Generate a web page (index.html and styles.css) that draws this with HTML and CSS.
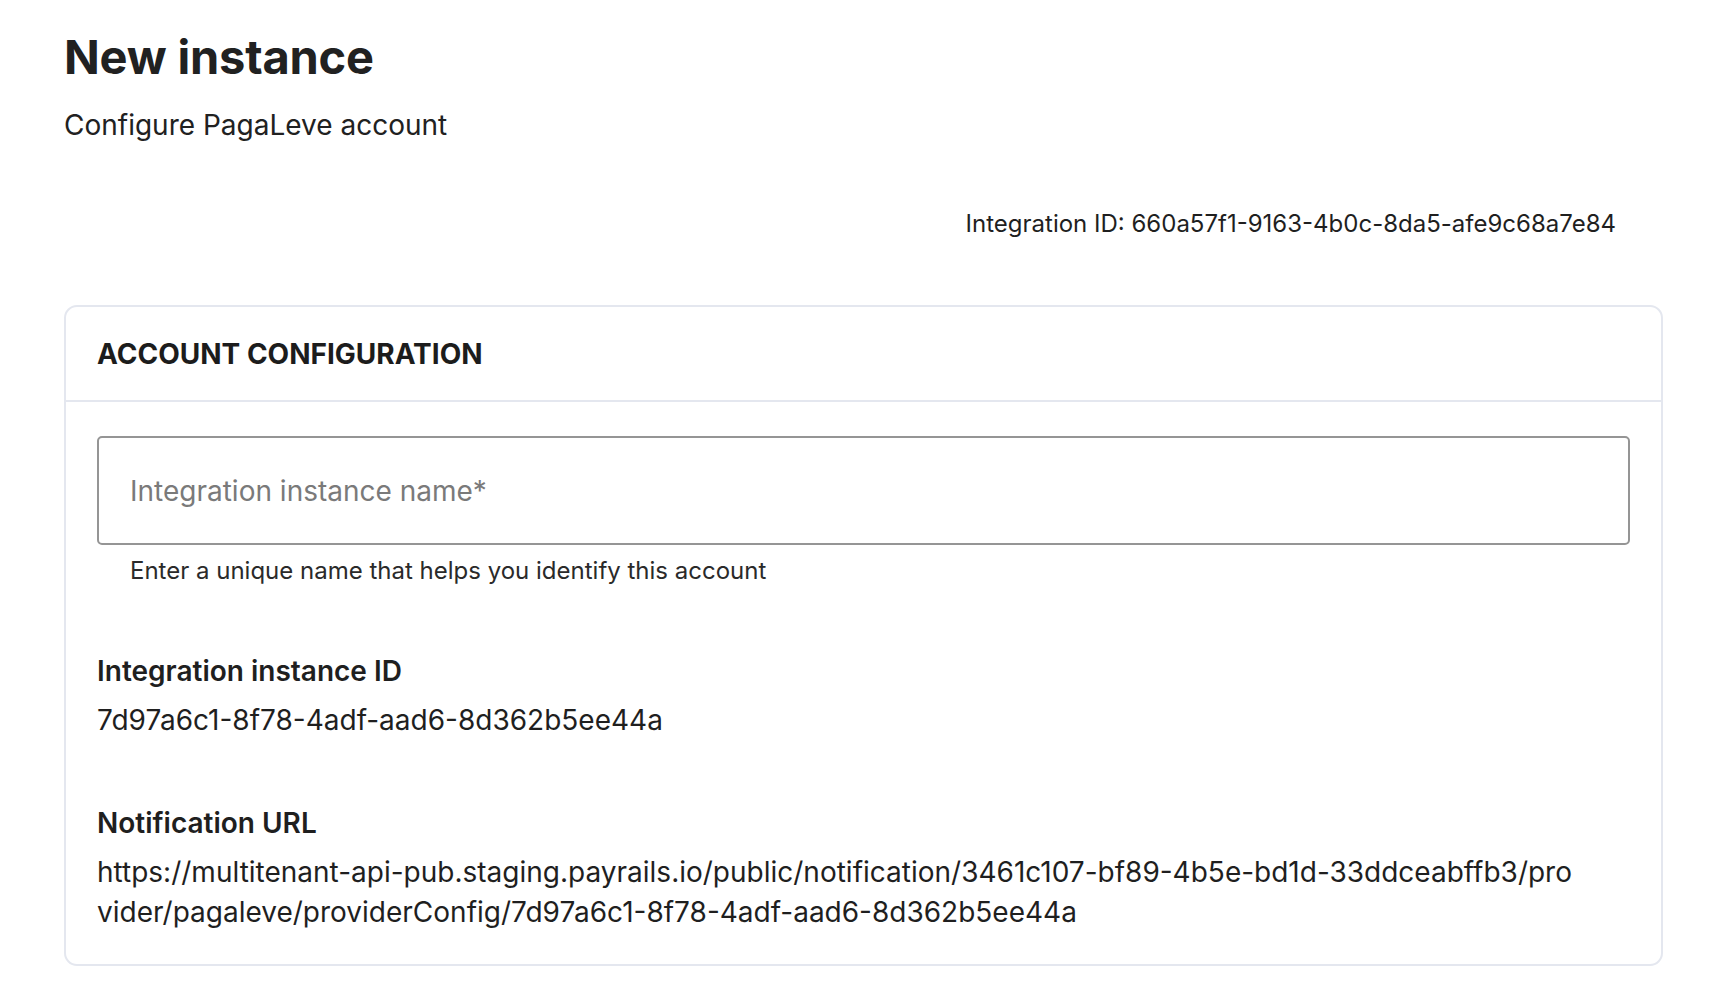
FILE: index.html
```html
<!DOCTYPE html>
<html lang="en">
<head>
<meta charset="utf-8">
<title>New instance</title>
<link rel="stylesheet" href="styles.css">
</head>
<body>
<main class="page">
  <header class="page-head">
    <h1 class="title">New instance</h1>
    <p class="subtitle">Configure PagaLeve account</p>
  </header>
  <div class="meta">Integration ID: 660a57f1-9163-4b0c-8da5-afe9c68a7e84</div>
  <section class="card">
    <div class="card-head">
      <h2 class="card-title">ACCOUNT CONFIGURATION</h2>
    </div>
    <div class="card-body">
      <div class="field-input">
        <input class="text-input" type="text" placeholder="Integration instance name*">
        <div class="helper">Enter a unique name that helps you identify this account</div>
      </div>
      <div class="field">
        <div class="label">Integration instance ID</div>
        <div class="value">7d97a6c1-8f78-4adf-aad6-8d362b5ee44a</div>
      </div>
      <div class="field">
        <div class="label">Notification URL</div>
        <div class="value url">https://multitenant-api-pub.staging.payrails.io/public/notification/3461c107-bf89-4b5e-bd1d-33ddceabffb3/provider/pagaleve/providerConfig/7d97a6c1-8f78-4adf-aad6-8d362b5ee44a</div>
      </div>
    </div>
  </section>
</main>
</body>
</html>
```

FILE: styles.css
```css
* { box-sizing: border-box; }
html, body { margin: 0; padding: 0; background: #ffffff; }
body {
  font-family: "Inter", "Noto Sans", "Liberation Sans", sans-serif;
  color: #1f1f1f;
}
.page {
  padding: 29px 61px 40px 64px;
}
.page-head { display: flex; flex-direction: column; }
.title {
  margin: 0;
  font-size: 47px;
  line-height: 56px;
  font-weight: 700;
  color: #212121;
  letter-spacing: -0.2px;
}
.subtitle {
  margin: 23px 0 0;
  font-size: 28px;
  line-height: 34px;
  color: #212121;
}
.meta {
  display: flex;
  justify-content: flex-end;
  margin-top: 67px;
  padding-right: 47px;
  font-size: 24px;
  line-height: 30px;
  color: #1f1f1f;
}
.card {
  margin-top: 66px;
  border: 2px solid #e4e7ef;
  border-radius: 13px;
  background: #fff;
}
.card-head {
  height: 95px;
  display: flex;
  align-items: center;
  padding: 0 31px;
  border-bottom: 2px solid #e4e7ef;
}
.card-title {
  margin: 0;
  font-size: 28px;
  font-weight: 700;
  color: #1c1c1c;
}
.card-body {
  padding: 34px 31px 32px;
  display: flex;
  flex-direction: column;
}
.field-input { display: flex; flex-direction: column; }
.text-input {
  height: 109px;
  width: 100%;
  border: 2px solid #959595;
  border-radius: 5px;
  padding: 0 31px;
  font-family: inherit;
  font-size: 28px;
  color: #1f1f1f;
  outline: none;
  background: #fff;
}
.text-input::placeholder { color: #7a7a7a; }
.helper {
  margin-top: 11px;
  padding-left: 33px;
  font-size: 24px;
  line-height: 30px;
  color: #2a2a2a;
}
.field { display: flex; flex-direction: column; gap: 11px; margin-top: 65px; }
.field-input + .field { margin-top: 67px; }
.label {
  font-size: 28px;
  line-height: 36px;
  font-weight: 600;
  color: #1f1f1f;
}
.value {
  font-size: 28px;
  line-height: 40px;
  color: #1f1f1f;
}
.url {
  word-break: break-all;
  padding-right: 48px;
}
```
